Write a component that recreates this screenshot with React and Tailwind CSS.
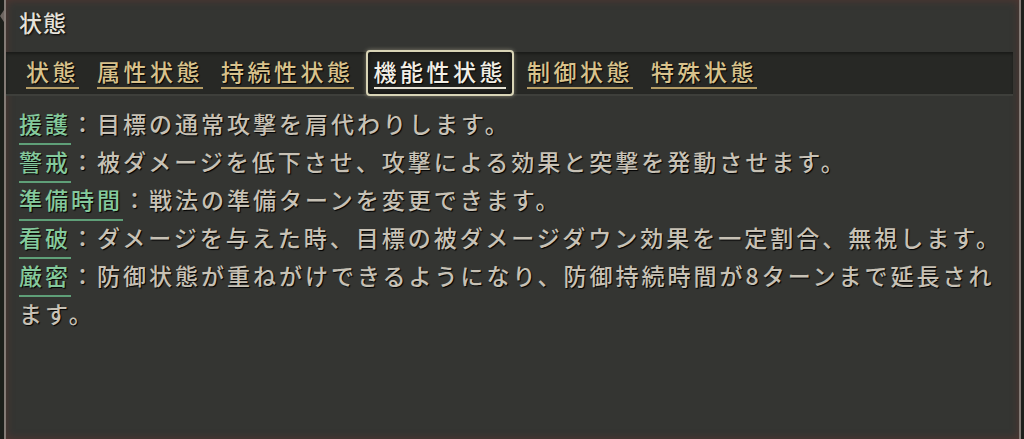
import React from 'react';

const FONT = { fontFamily: '"Noto Sans CJK JP", "Noto Sans", sans-serif' };

const TABS = ['状態', '属性状態', '持続性状態', '機能性状態', '制御状態', '特殊状態'];
const ACTIVE = '機能性状態';

const ENTRIES = [
  { key: '援護', text: '：目標の通常攻撃を肩代わりします。' },
  { key: '警戒', text: '：被ダメージを低下させ、攻撃による効果と突撃を発動させます。' },
  { key: '準備時間', text: '：戦法の準備ターンを変更できます。' },
  { key: '看破', text: '：ダメージを与えた時、目標の被ダメージダウン効果を一定割合、無視します。' },
  { key: '厳密', text: '：防御状態が重ねがけできるようになり、防御持続時間が8ターンまで延長され', rest: 'ます。' },
];

function Tab({ label }) {
  if (label === ACTIVE) {
    return (
      <div className="h-[46px] -ml-[6px] -mr-[5px] flex items-center px-[6px] border-2 border-[#d8d4b6] rounded-[4px] bg-[#21221f] shadow-[0_0_4px_rgba(230,225,190,0.45),inset_0_0_4px_rgba(0,0,0,0.6)]">
        <span className="text-[23px] leading-[28px] tracking-[3.5px] text-[#f2efe6] border-b-2 border-[#e6e2d4] pb-[2px] [text-shadow:1px_1px_1px_#000]">
          {label}
        </span>
      </div>
    );
  }
  return (
    <span className="text-[23px] leading-[28px] tracking-[3.5px] text-[#d8c28c] border-b-2 border-[#b59d66] pb-[2px] [text-shadow:1px_1px_1px_#000]">
      {label}
    </span>
  );
}

export default function App() {
  return (
    <div className="w-[1024px] h-[439px] bg-[#1d1f1b] flex overflow-hidden font-medium" style={FONT}>
      {/* left edge strip with pointer */}
      <div className="w-[4px] relative">
        <div className="absolute left-0 top-[10px] w-0 h-0 border-y-[6px] border-y-transparent border-r-[4px] border-r-[#6d6560]" />
      </div>

      {/* PANEL */}
      <div className="flex-1 mr-[3px] bg-[#343532] border-x-2 border-[#847b76] shadow-[inset_0_0_9px_rgba(95,55,50,0.75)] flex flex-col">
        {/* TITLE */}
        <div className="h-[52px] pl-[13px] pt-[7px] text-[23px] leading-[30px] tracking-[1px] text-[#e6e2da] [text-shadow:1px_1px_2px_#000]">
          状態
        </div>

        {/* TABS */}
        <div className="h-[44px] mr-[6px] flex items-center gap-[18px] pl-[20px] bg-[#272825] border-b-2 border-[#3e3f3b] shadow-[inset_0_2px_3px_rgba(0,0,0,0.35)]">
          {TABS.map((t) => (
            <Tab key={t} label={t} />
          ))}
        </div>

        {/* ENTRIES */}
        <div className="mt-[8px] pl-[13px] text-[23px] leading-[38px] tracking-[3px] text-[#c7c1b5] [text-shadow:1px_1px_1px_#000]">
          {ENTRIES.map((e) => (
            <div key={e.key} className="whitespace-nowrap">
              <span className="text-[#84c99c] border-b-2 border-[#5f9f78] pb-[3px]">{e.key}</span>
              <span>{e.text}</span>
              {e.rest && (
                <>
                  <br />
                  <span>{e.rest}</span>
                </>
              )}
            </div>
          ))}
        </div>
      </div>
    </div>
  );
}
